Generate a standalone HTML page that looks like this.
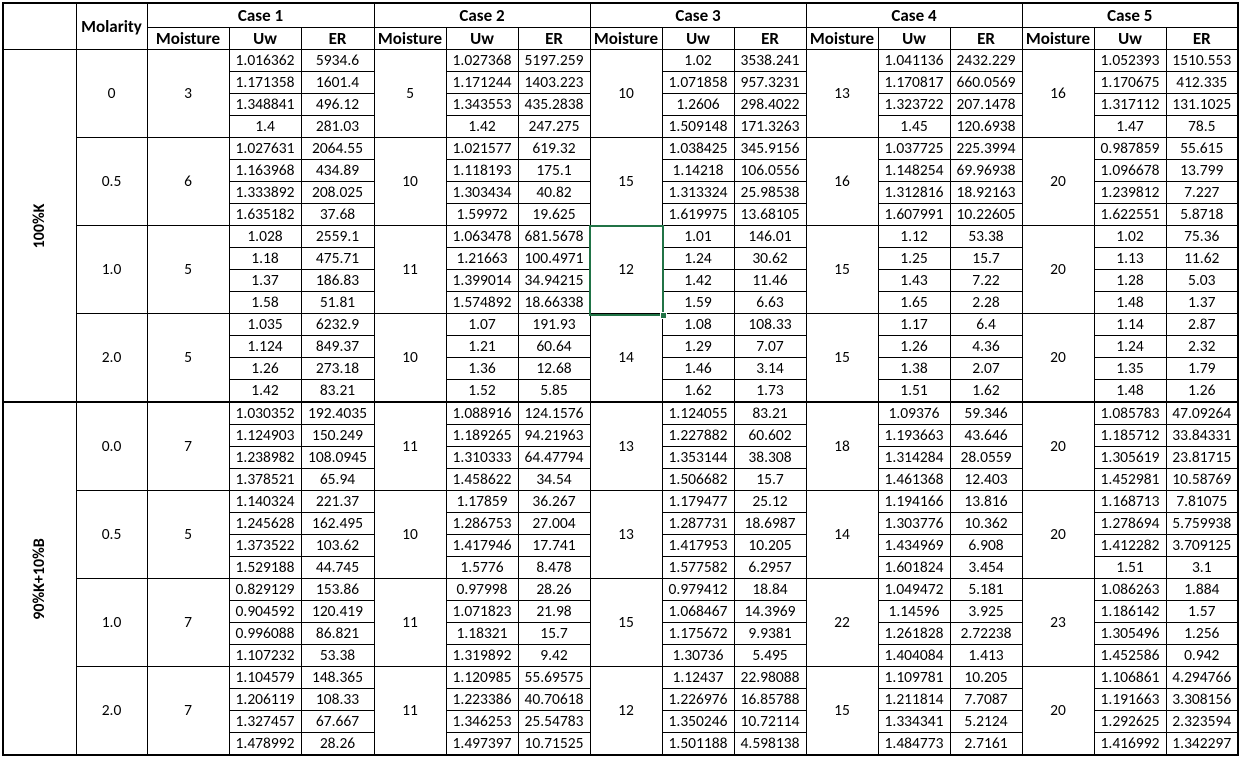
<!DOCTYPE html>
<html><head><meta charset="utf-8">
<style>
html,body{margin:0;padding:0;background:#fff;width:1240px;height:760px;overflow:hidden;position:relative;}
table{position:absolute;left:2px;top:2px;border-collapse:collapse;table-layout:fixed;font-family:Carlito,Calibri,"Liberation Sans",sans-serif;font-size:15.5px;color:#000;border:2px solid #000;}
td{border:1px solid #000;text-align:center;padding:0;height:21px;line-height:20px;white-space:nowrap;overflow:hidden;}
tr.h1 td{height:23px;font-weight:bold;font-size:17px;line-height:19px;}
tr.h2 td{height:21px;font-weight:bold;font-size:17px;}
tr.sep td{border-top:2px solid #000;}
.lab{position:relative;font-weight:bold;font-size:16px;}
.lab span{position:absolute;left:50%;top:50%;transform:translate(-50%,-50%) rotate(-90deg);white-space:nowrap;}
#sel{position:absolute;left:589px;top:225px;width:71px;height:87px;border:2px solid #217346;}
#sel:after{content:"";position:absolute;right:-5px;bottom:-5px;width:5px;height:5px;background:#217346;border:1px solid #fff;}
</style></head><body>
<table>
<colgroup><col style="width:73px"><col style="width:71px"><col style="width:82px"><col style="width:72px"><col style="width:73px">
<col style="width:72px"><col style="width:72px"><col style="width:72px"><col style="width:72px"><col style="width:72px"><col style="width:72px"><col style="width:72px"><col style="width:72px"><col style="width:72px"><col style="width:72px"><col style="width:72px"><col style="width:72px"></colgroup>
<tr class="h1"><td rowspan="2" style="border-top:none;border-left:none"></td><td rowspan="2">Molarity</td><td colspan="3">Case 1</td><td colspan="3">Case 2</td><td colspan="3">Case 3</td><td colspan="3">Case 4</td><td colspan="3">Case 5</td></tr>
<tr class="h2"><td>Moisture</td><td>Uw</td><td>ER</td><td>Moisture</td><td>Uw</td><td>ER</td><td>Moisture</td><td>Uw</td><td>ER</td><td>Moisture</td><td>Uw</td><td>ER</td><td>Moisture</td><td>Uw</td><td>ER</td></tr>

<tr><td rowspan="16" class="lab"><span>100%K</span></td><td rowspan="4">0</td><td rowspan="4">3</td><td>1.016362</td><td>5934.6</td><td rowspan="4">5</td><td>1.027368</td><td>5197.259</td><td rowspan="4">10</td><td>1.02</td><td>3538.241</td><td rowspan="4">13</td><td>1.041136</td><td>2432.229</td><td rowspan="4">16</td><td>1.052393</td><td>1510.553</td></tr>
<tr><td>1.171358</td><td>1601.4</td><td>1.171244</td><td>1403.223</td><td>1.071858</td><td>957.3231</td><td>1.170817</td><td>660.0569</td><td>1.170675</td><td>412.335</td></tr>
<tr><td>1.348841</td><td>496.12</td><td>1.343553</td><td>435.2838</td><td>1.2606</td><td>298.4022</td><td>1.323722</td><td>207.1478</td><td>1.317112</td><td>131.1025</td></tr>
<tr><td>1.4</td><td>281.03</td><td>1.42</td><td>247.275</td><td>1.509148</td><td>171.3263</td><td>1.45</td><td>120.6938</td><td>1.47</td><td>78.5</td></tr>

<tr><td rowspan="4">0.5</td><td rowspan="4">6</td><td>1.027631</td><td>2064.55</td><td rowspan="4">10</td><td>1.021577</td><td>619.32</td><td rowspan="4">15</td><td>1.038425</td><td>345.9156</td><td rowspan="4">16</td><td>1.037725</td><td>225.3994</td><td rowspan="4">20</td><td>0.987859</td><td>55.615</td></tr>
<tr><td>1.163968</td><td>434.89</td><td>1.118193</td><td>175.1</td><td>1.14218</td><td>106.0556</td><td>1.148254</td><td>69.96938</td><td>1.096678</td><td>13.799</td></tr>
<tr><td>1.333892</td><td>208.025</td><td>1.303434</td><td>40.82</td><td>1.313324</td><td>25.98538</td><td>1.312816</td><td>18.92163</td><td>1.239812</td><td>7.227</td></tr>
<tr><td>1.635182</td><td>37.68</td><td>1.59972</td><td>19.625</td><td>1.619975</td><td>13.68105</td><td>1.607991</td><td>10.22605</td><td>1.622551</td><td>5.8718</td></tr>

<tr><td rowspan="4">1.0</td><td rowspan="4">5</td><td>1.028</td><td>2559.1</td><td rowspan="4">11</td><td>1.063478</td><td>681.5678</td><td rowspan="4">12</td><td>1.01</td><td>146.01</td><td rowspan="4">15</td><td>1.12</td><td>53.38</td><td rowspan="4">20</td><td>1.02</td><td>75.36</td></tr>
<tr><td>1.18</td><td>475.71</td><td>1.21663</td><td>100.4971</td><td>1.24</td><td>30.62</td><td>1.25</td><td>15.7</td><td>1.13</td><td>11.62</td></tr>
<tr><td>1.37</td><td>186.83</td><td>1.399014</td><td>34.94215</td><td>1.42</td><td>11.46</td><td>1.43</td><td>7.22</td><td>1.28</td><td>5.03</td></tr>
<tr><td>1.58</td><td>51.81</td><td>1.574892</td><td>18.66338</td><td>1.59</td><td>6.63</td><td>1.65</td><td>2.28</td><td>1.48</td><td>1.37</td></tr>

<tr><td rowspan="4">2.0</td><td rowspan="4">5</td><td>1.035</td><td>6232.9</td><td rowspan="4">10</td><td>1.07</td><td>191.93</td><td rowspan="4">14</td><td>1.08</td><td>108.33</td><td rowspan="4">15</td><td>1.17</td><td>6.4</td><td rowspan="4">20</td><td>1.14</td><td>2.87</td></tr>
<tr><td>1.124</td><td>849.37</td><td>1.21</td><td>60.64</td><td>1.29</td><td>7.07</td><td>1.26</td><td>4.36</td><td>1.24</td><td>2.32</td></tr>
<tr><td>1.26</td><td>273.18</td><td>1.36</td><td>12.68</td><td>1.46</td><td>3.14</td><td>1.38</td><td>2.07</td><td>1.35</td><td>1.79</td></tr>
<tr><td>1.42</td><td>83.21</td><td>1.52</td><td>5.85</td><td>1.62</td><td>1.73</td><td>1.51</td><td>1.62</td><td>1.48</td><td>1.26</td></tr>

<tr class="sep"><td rowspan="16" class="lab"><span>90%K+10%B</span></td><td rowspan="4">0.0</td><td rowspan="4">7</td><td>1.030352</td><td>192.4035</td><td rowspan="4">11</td><td>1.088916</td><td>124.1576</td><td rowspan="4">13</td><td>1.124055</td><td>83.21</td><td rowspan="4">18</td><td>1.09376</td><td>59.346</td><td rowspan="4">20</td><td>1.085783</td><td>47.09264</td></tr>
<tr><td>1.124903</td><td>150.249</td><td>1.189265</td><td>94.21963</td><td>1.227882</td><td>60.602</td><td>1.193663</td><td>43.646</td><td>1.185712</td><td>33.84331</td></tr>
<tr><td>1.238982</td><td>108.0945</td><td>1.310333</td><td>64.47794</td><td>1.353144</td><td>38.308</td><td>1.314284</td><td>28.0559</td><td>1.305619</td><td>23.81715</td></tr>
<tr><td>1.378521</td><td>65.94</td><td>1.458622</td><td>34.54</td><td>1.506682</td><td>15.7</td><td>1.461368</td><td>12.403</td><td>1.452981</td><td>10.58769</td></tr>

<tr><td rowspan="4">0.5</td><td rowspan="4">5</td><td>1.140324</td><td>221.37</td><td rowspan="4">10</td><td>1.17859</td><td>36.267</td><td rowspan="4">13</td><td>1.179477</td><td>25.12</td><td rowspan="4">14</td><td>1.194166</td><td>13.816</td><td rowspan="4">20</td><td>1.168713</td><td>7.81075</td></tr>
<tr><td>1.245628</td><td>162.495</td><td>1.286753</td><td>27.004</td><td>1.287731</td><td>18.6987</td><td>1.303776</td><td>10.362</td><td>1.278694</td><td>5.759938</td></tr>
<tr><td>1.373522</td><td>103.62</td><td>1.417946</td><td>17.741</td><td>1.417953</td><td>10.205</td><td>1.434969</td><td>6.908</td><td>1.412282</td><td>3.709125</td></tr>
<tr><td>1.529188</td><td>44.745</td><td>1.5776</td><td>8.478</td><td>1.577582</td><td>6.2957</td><td>1.601824</td><td>3.454</td><td>1.51</td><td>3.1</td></tr>

<tr><td rowspan="4">1.0</td><td rowspan="4">7</td><td>0.829129</td><td>153.86</td><td rowspan="4">11</td><td>0.97998</td><td>28.26</td><td rowspan="4">15</td><td>0.979412</td><td>18.84</td><td rowspan="4">22</td><td>1.049472</td><td>5.181</td><td rowspan="4">23</td><td>1.086263</td><td>1.884</td></tr>
<tr><td>0.904592</td><td>120.419</td><td>1.071823</td><td>21.98</td><td>1.068467</td><td>14.3969</td><td>1.14596</td><td>3.925</td><td>1.186142</td><td>1.57</td></tr>
<tr><td>0.996088</td><td>86.821</td><td>1.18321</td><td>15.7</td><td>1.175672</td><td>9.9381</td><td>1.261828</td><td>2.72238</td><td>1.305496</td><td>1.256</td></tr>
<tr><td>1.107232</td><td>53.38</td><td>1.319892</td><td>9.42</td><td>1.30736</td><td>5.495</td><td>1.404084</td><td>1.413</td><td>1.452586</td><td>0.942</td></tr>

<tr><td rowspan="4">2.0</td><td rowspan="4">7</td><td>1.104579</td><td>148.365</td><td rowspan="4">11</td><td>1.120985</td><td>55.69575</td><td rowspan="4">12</td><td>1.12437</td><td>22.98088</td><td rowspan="4">15</td><td>1.109781</td><td>10.205</td><td rowspan="4">20</td><td>1.106861</td><td>4.294766</td></tr>
<tr><td>1.206119</td><td>108.33</td><td>1.223386</td><td>40.70618</td><td>1.226976</td><td>16.85788</td><td>1.211814</td><td>7.7087</td><td>1.191663</td><td>3.308156</td></tr>
<tr><td>1.327457</td><td>67.667</td><td>1.346253</td><td>25.54783</td><td>1.350246</td><td>10.72114</td><td>1.334341</td><td>5.2124</td><td>1.292625</td><td>2.323594</td></tr>
<tr><td>1.478992</td><td>28.26</td><td>1.497397</td><td>10.71525</td><td>1.501188</td><td>4.598138</td><td>1.484773</td><td>2.7161</td><td>1.416992</td><td>1.342297</td></tr>
</table>
<div id="sel"></div>
</body></html>
